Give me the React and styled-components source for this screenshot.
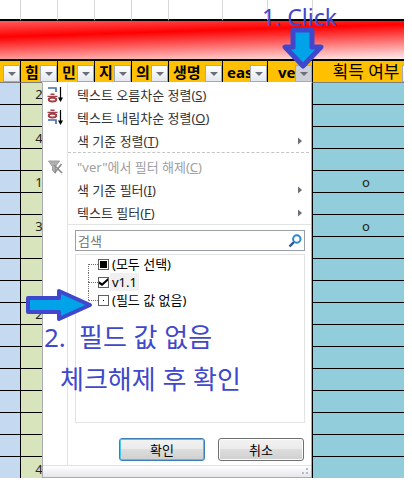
import React, { useState } from 'react';
import styled, { createGlobalStyle } from 'styled-components';

const columns = [
  { width: 21, label: '' },
  { width: 37, label: '힘' },
  { width: 37, label: '민' },
  { width: 37, label: '지' },
  { width: 37, label: '의' },
  { width: 54, label: '생명' },
  { width: 45, label: 'eas' },
  { width: 45, label: 'ver', center: true, active: true },
  { label: '획득 여부', center: true, plain: true },
];

const rows = [
  ['2', ''], ['', ''], ['4', ''], ['', ''], ['1', 'o'], ['', ''], ['3', 'o'], ['', ''], ['', ''],
  ['', ''], ['2', ''], ['', ''], ['', ''], ['', ''], ['', ''], ['', ''], ['', ''], ['4', ''],
];

const SortIcon = ({ down }) => (
  <svg width="18" height="18" viewBox="0 0 18 18" fill="none" aria-hidden="true">
    <g transform={down ? 'translate(0 9)' : undefined}>
      <path d="M1 2h8v4" stroke="#3f68b4" strokeWidth="1.6" />
    </g>
    <g transform={down ? 'translate(0 -7)' : undefined} stroke="#a04048">
      <path d="M3.5 8.2h4M0.5 10.4h10" strokeWidth="1.4" />
      <ellipse cx="5.5" cy="13.6" rx="3.8" ry="1.9" strokeWidth="1.9" />
    </g>
    <path d="M13.5 1v13" stroke="#000" strokeWidth="1.2" />
    <path d="M11 11.5h5l-2.5 4.5z" fill="#000" />
  </svg>
);

const ClearFilterIcon = () => (
  <svg width="18" height="18" viewBox="0 0 18 18" fill="none" aria-hidden="true">
    <path d="M1.5 3h11L8.5 8.5V15l-3-2.5v-4z" fill="#b0b0b0" stroke="#9a9a9a" />
    <path d="M7 7l8 8M14.5 6L7.5 15" stroke="#8c8c8c" strokeWidth="1.7" />
  </svg>
);

const SearchIcon = () => (
  <svg width="14" height="14" viewBox="0 0 14 14" fill="none" aria-hidden="true">
    <path d="M1.5 12.5L6 8" stroke="#2c4f9c" strokeWidth="2.4" />
    <circle cx="8.8" cy="5" r="3.7" stroke="#2f86cc" strokeWidth="2" />
  </svg>
);

const Triangle = ({ right }) => (
  <svg width="8" height="8" viewBox="0 0 8 8" aria-hidden="true">
    <path d={right ? 'M2 0.5L6 4L2 7.5z' : 'M0 2h8L4 6z'} fill="#6b6f75" />
  </svg>
);

const App = () => {
  const [keyword, setKeyword] = useState('');
  const [checked, setChecked] = useState({ ver: true, blank: false });

  const toggle = (name) => setChecked({ ...checked, [name]: !checked[name] });

  return (
    <Sheet>
      <GlobalStyle />
      <Table>
        <colgroup>
          {columns.map((col, index) => (
            <Col key={index} $width={col.width} />
          ))}
        </colgroup>
        <thead>
          <tr>
            {columns.map((col, index) => (
              <BlankCell key={index} />
            ))}
          </tr>
          <tr>
            <Band colSpan={columns.length} />
          </tr>
          <tr>
            {columns.map((col, index) => (
              <HeadCell key={index} $plain={col.plain}>
                <HeadInner $center={col.center}>
                  {col.label}
                  <FilterButton type="button" aria-label={`${col.label} 필터`} $active={col.active}>
                    <Triangle />
                  </FilterButton>
                </HeadInner>
              </HeadCell>
            ))}
          </tr>
        </thead>
        <tbody>
          {rows.map(([power, owned], index) => (
            <Row key={index}>
              <Cell $color="#c5d9f1" />
              <Cell $color="#d8e4bc">{power}</Cell>
              <Cell $color="#d8e4bc" colSpan={6} />
              <Cell $color="#92cddc">{owned}</Cell>
            </Row>
          ))}
        </tbody>
      </Table>

      <Menu>
        <MenuBody>
          <MenuItem type="button">
            <IconSlot><SortIcon /></IconSlot>
            <span>텍스트 오름차순 정렬(<u>S</u>)</span>
          </MenuItem>
          <MenuItem type="button">
            <IconSlot><SortIcon down /></IconSlot>
            <span>텍스트 내림차순 정렬(<u>O</u>)</span>
          </MenuItem>
          <MenuItem type="button">
            <IconSlot />
            <span>색 기준 정렬(<u>T</u>)</span>
            <Triangle right />
          </MenuItem>
          <DashedLine />
          <MenuItem type="button" disabled>
            <IconSlot><ClearFilterIcon /></IconSlot>
            <span>"ver"에서 필터 해제(<u>C</u>)</span>
          </MenuItem>
          <MenuItem type="button">
            <IconSlot />
            <span>색 기준 필터(<u>I</u>)</span>
            <Triangle right />
          </MenuItem>
          <MenuItem type="button">
            <IconSlot />
            <span>텍스트 필터(<u>F</u>)</span>
            <Triangle right />
          </MenuItem>
          <Panel>
            <SearchBox>
              <SearchInput
                aria-label="검색"
                placeholder="검색"
                value={keyword}
                onChange={(e) => setKeyword(e.target.value)}
              />
              <SearchIcon />
            </SearchBox>
            <Tree>
              <TreeItem>
                <Branch $first />
                <Check id="all" type="checkbox" $mark="mixed" checked={false} readOnly />
                <TreeLabel htmlFor="all">(모두 선택)</TreeLabel>
              </TreeItem>
              <TreeItem>
                <Branch />
                <Check id="ver" type="checkbox" checked={checked.ver} onChange={() => toggle('ver')} />
                <TreeLabel htmlFor="ver" $selected>v1.1</TreeLabel>
              </TreeItem>
              <TreeItem>
                <Branch $last />
                <Check id="blank" type="checkbox" $mark="dot" checked={checked.blank} onChange={() => toggle('blank')} />
                <TreeLabel htmlFor="blank">(필드 값 없음)</TreeLabel>
              </TreeItem>
            </Tree>
            <Buttons>
              <Button type="button" $primary>확인</Button>
              <Button type="button">취소</Button>
            </Buttons>
          </Panel>
        </MenuBody>
        <MenuFooter>
          <svg width="8" height="8" viewBox="0 0 8 8" fill="#b4bac2" aria-hidden="true">
            <path d="M5 0h2v2H5zM1 4h2v2H1zM5 4h2v2H5z" />
          </svg>
        </MenuFooter>
      </Menu>

      <Note $left={262} $top={1} $size={23}>1. Click</Note>
      <Note $left={44} $top={321} $size={26}>
        <Step>2.</Step>필드 값 없음
      </Note>
      <Note $left={60} $top={363} $size={26}>체크해제 후 확인</Note>
      <Arrow $left={282} $top={27} $stroke={5} width="42" height="44" viewBox="0 0 42 44">
        <path d="M11 3h19v17h9L21 39 3 20h8z" />
      </Arrow>
      <Arrow $left={24} $top={287} $stroke={4} width="70" height="36" viewBox="0 0 70 36">
        <path d="M4 11h31V4l31 14-31 14v-7H4z" />
      </Arrow>
    </Sheet>
  );
};

export default App;

const GlobalStyle = createGlobalStyle`
  * {
    box-sizing: border-box;
  }

  body {
    margin: 0 8px 8px 0;
    background: #fff;
  }

  body, button, input {
    font-family: 'Noto Sans', 'Noto Sans CJK KR', sans-serif;
    font-size: 13px;
  }
`;

const Sheet = styled.main`
  position: relative;
  overflow: hidden;
`;

const Table = styled.table`
  width: calc(100% + 16px);
  table-layout: fixed;
  border-collapse: separate;
  border-spacing: 0;
`;

const Col = styled.col`
  width: ${({ $width }) => ($width ? `${$width}px` : 'auto')};
`;

const BlankCell = styled.td`
  height: 21px;
  padding: 0;
  border-right: 1px solid #d8d8d8;
  border-bottom: 2px solid #000;
`;

const Band = styled.td`
  height: 40px;
  padding: 0;
  border-bottom: 2px solid #000;
  background: linear-gradient(178.2deg, #ff5c5c 0%, #f00 31%, #ff9c9c 75%, #fff0f0 100%);
`;

const HeadCell = styled.th`
  height: 22px;
  padding: 0;
  border-right: 1px solid #000;
  border-bottom: 1px solid #7f7f7f;
  background: #ffc000;
  font-size: ${({ $plain }) => ($plain ? 17 : 15)}px;
  font-weight: ${({ $plain }) => ($plain ? 400 : 700)};
`;

const HeadInner = styled.div`
  position: relative;
  display: flex;
  align-items: center;
  justify-content: ${({ $center }) => ($center ? 'center' : 'flex-start')};
  height: 21px;
  padding-left: ${({ $center }) => ($center ? 0 : 4)}px;
  line-height: 20px;
  white-space: nowrap;
`;

const FilterButton = styled.button`
  position: absolute;
  right: 0;
  bottom: 0;
  display: flex;
  align-items: center;
  justify-content: center;
  width: 17px;
  height: 17px;
  padding: 0;
  border: 1px solid #a3aab5;
  background: ${({ $active }) => ($active ? '#cdd0d6' : 'linear-gradient(#fff, #e4e8ee)')};
`;

const Cell = styled.td`
  padding: 0;
  border-right: 1px solid #000;
  border-bottom: 1px solid #000;
  background: ${({ $color }) => $color};
  color: #222;
  line-height: 18px;
  text-align: center;
`;

const Row = styled.tr`
  height: 22px;

  &:last-child {
    height: 21px;
  }

  &:last-child ${Cell} {
    border-bottom: 0;
    vertical-align: bottom;
  }
`;

const Menu = styled.section`
  position: absolute;
  top: 82px;
  bottom: 0;
  left: 42px;
  display: flex;
  flex-direction: column;
  width: 270px;
  border: 1px solid #a7abb0;
  border-top-color: #fff;
  background: #fff;
`;

const MenuBody = styled.div`
  flex: 1;
  background: linear-gradient(#e2e3e3, #e2e3e3) 24px 0 / 1px 100% no-repeat;
`;

const MenuItem = styled.button`
  display: flex;
  align-items: center;
  width: 100%;
  height: 23px;
  padding: 0 7px 0 0;
  border: 0;
  background: none;
  color: #333;
  line-height: 20px;
  text-align: left;

  &:disabled {
    color: #a0a0a0;
  }

  > span {
    flex: 1;
  }
`;

const IconSlot = styled.i`
  display: flex;
  width: 34px;
  padding-left: 4px;
`;

const DashedLine = styled.div`
  height: 3px;
  margin: 0 2px 0 25px;
  border-top: 1px dashed #c5c5c5;
`;

const Panel = styled.div`
  margin-left: 25px;
  padding: 5px 6px 0 7px;
  border-top: 1px solid #e2e3e3;
`;

const SearchBox = styled.div`
  display: flex;
  align-items: center;
  height: 21px;
  padding: 0 2px;
  border: 1px solid #9a9ea6;
`;

const SearchInput = styled.input`
  flex: 1;
  min-width: 0;
  height: 18px;
  padding: 0;
  border: 0;
  outline: 0;
  background: none;

  &::placeholder {
    color: #777;
  }
`;

const Tree = styled.ul`
  height: 169px;
  margin: 3px 0 15px;
  padding: 0 0 0 12px;
  border: 1px solid #e2e3e3;
  list-style: none;
`;

const TreeItem = styled.li`
  display: flex;
  align-items: center;
  height: 18px;
`;

// dotted elbow to the left of each tick box
const Branch = styled.i`
  display: grid;
  grid-template-rows: 9px 9px;
  width: 10px;
  height: 18px;

  &::before,
  &::after {
    content: '';
    border-left: 1px dotted #707070;
  }

  &::before {
    border-left-color: ${({ $first }) => ($first ? 'transparent' : '#707070')};
  }

  &::after {
    border-left-color: ${({ $last }) => ($last ? 'transparent' : '#707070')};
    border-top: 1px dotted #707070;
  }
`;

const Check = styled.input`
  appearance: none;
  display: grid;
  place-items: center;
  width: 11px;
  height: 11px;
  margin: 0;
  border: 1px solid #606060;
  background: #fff;

  &::before {
    content: '';
    width: ${({ $mark }) => ({ mixed: 7, dot: 1 })[$mark] || 0}px;
    height: ${({ $mark }) => ({ mixed: 7, dot: 1 })[$mark] || 0}px;
    background: #000;
  }

  &:checked::before {
    width: 9px;
    height: 8px;
    clip-path: polygon(0 40%, 35% 65%, 100% 0, 100% 35%, 35% 100%, 0 75%);
  }
`;

const TreeLabel = styled.label`
  margin-left: 1px;
  padding: 0 2px;
  background: ${({ $selected }) => ($selected ? '#f0f0f0' : 'none')};
  line-height: 18px;
`;

const Buttons = styled.div`
  display: flex;
  justify-content: flex-end;
  gap: 13px;
  padding-right: 1px;
`;

const Button = styled.button`
  width: 86px;
  height: 23px;
  padding: 0;
  border: 1px solid ${({ $primary }) => ($primary ? '#3c7fb1' : '#707070')};
  border-radius: 3px;
  background: linear-gradient(#f2f2f2, #ebebeb 50%, #dddddd 50%, #cfcfcf);
  box-shadow: inset 0 0 0 1px ${({ $primary }) => ($primary ? '#48c8f0' : '#fcfcfc')};
  line-height: 18px;
`;

const MenuFooter = styled.div`
  display: flex;
  align-items: center;
  justify-content: flex-end;
  height: 12px;
  padding-right: 2px;
  border-top: 1px solid #dbe3ea;
  background: linear-gradient(#fff, #e4e6e9);
`;

const Note = styled.p`
  position: absolute;
  top: ${({ $top }) => $top}px;
  left: ${({ $left }) => $left}px;
  margin: 0;
  color: #3f48cc;
  font-size: ${({ $size }) => $size}px;
  line-height: 32px;
  white-space: nowrap;
  pointer-events: none;
`;

const Step = styled.span`
  display: inline-block;
  width: 35px;
`;

const Arrow = styled.svg`
  position: absolute;
  top: ${({ $top }) => $top}px;
  left: ${({ $left }) => $left}px;
  fill: #00a2e8;
  stroke: #3f48cc;
  stroke-width: ${({ $stroke }) => $stroke};
  stroke-linejoin: round;
  pointer-events: none;
`;
